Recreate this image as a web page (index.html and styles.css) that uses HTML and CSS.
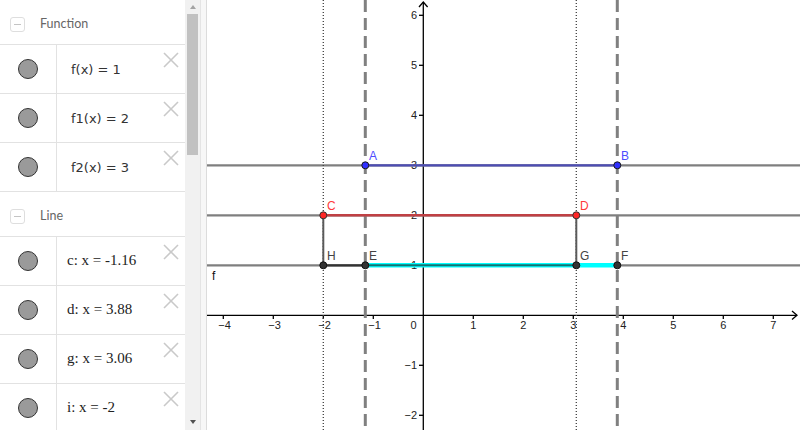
FILE: index.html
```html
<!DOCTYPE html>
<html>
<head>
<meta charset="utf-8">
<link rel="stylesheet" href="styles.css">
</head>
<body>
<div class="app">
  <div class="algebra">
    <div class="list">
      <div class="group-head"><span class="toggle"></span><span class="group-title">Function</span></div>
      <div class="item">
        <div class="marble-cell"><span class="marble"></span></div>
        <div class="def fn">f(x) = 1</div>
        <svg class="close" viewBox="0 0 16 16"><line x1="1" y1="1" x2="15" y2="15"/><line x1="15" y1="1" x2="1" y2="15"/></svg>
      </div>
      <div class="item">
        <div class="marble-cell"><span class="marble"></span></div>
        <div class="def fn">f1(x) = 2</div>
        <svg class="close" viewBox="0 0 16 16"><line x1="1" y1="1" x2="15" y2="15"/><line x1="15" y1="1" x2="1" y2="15"/></svg>
      </div>
      <div class="item">
        <div class="marble-cell"><span class="marble"></span></div>
        <div class="def fn">f2(x) = 3</div>
        <svg class="close" viewBox="0 0 16 16"><line x1="1" y1="1" x2="15" y2="15"/><line x1="15" y1="1" x2="1" y2="15"/></svg>
      </div>
      <div class="group-head"><span class="toggle"></span><span class="group-title">Line</span></div>
      <div class="item">
        <div class="marble-cell"><span class="marble"></span></div>
        <div class="def ln">c: x = -1.16</div>
        <svg class="close" viewBox="0 0 16 16"><line x1="1" y1="1" x2="15" y2="15"/><line x1="15" y1="1" x2="1" y2="15"/></svg>
      </div>
      <div class="item">
        <div class="marble-cell"><span class="marble"></span></div>
        <div class="def ln">d: x = 3.88</div>
        <svg class="close" viewBox="0 0 16 16"><line x1="1" y1="1" x2="15" y2="15"/><line x1="15" y1="1" x2="1" y2="15"/></svg>
      </div>
      <div class="item">
        <div class="marble-cell"><span class="marble"></span></div>
        <div class="def ln">g: x = 3.06</div>
        <svg class="close" viewBox="0 0 16 16"><line x1="1" y1="1" x2="15" y2="15"/><line x1="15" y1="1" x2="1" y2="15"/></svg>
      </div>
      <div class="item">
        <div class="marble-cell"><span class="marble"></span></div>
        <div class="def ln">i: x = -2</div>
        <svg class="close" viewBox="0 0 16 16"><line x1="1" y1="1" x2="15" y2="15"/><line x1="15" y1="1" x2="1" y2="15"/></svg>
      </div>
    </div>
    <div class="scrollbar">
      <div class="arrow-box top"><span class="arrow up"></span></div>
      <div class="thumb"></div>
      <div class="track-rest"></div>
      <div class="arrow-box bottom"><span class="arrow down"></span></div>
    </div>
  </div>
  <div class="splitter"></div>
  <svg class="graphics" width="593" height="430" viewBox="207 0 593 430">
    <g class="axis">
      <line x1="207" y1="315.3" x2="797" y2="315.3"/>
      <polyline class="arrowhead" points="792,311 797,315.3 792,319.6"/>
      <line x1="423.3" y1="2" x2="423.3" y2="430"/>
      <polyline class="arrowhead" points="419,7 423.3,2 427.6,7"/>
      <line x1="223.3" y1="315" x2="223.3" y2="319"/>
      <line x1="273.3" y1="315" x2="273.3" y2="319"/>
      <line x1="323.3" y1="315" x2="323.3" y2="319"/>
      <line x1="373.3" y1="315" x2="373.3" y2="319"/>
      <line x1="473.3" y1="315" x2="473.3" y2="319"/>
      <line x1="523.3" y1="315" x2="523.3" y2="319"/>
      <line x1="573.3" y1="315" x2="573.3" y2="319"/>
      <line x1="623.3" y1="315" x2="623.3" y2="319"/>
      <line x1="673.3" y1="315" x2="673.3" y2="319"/>
      <line x1="723.3" y1="315" x2="723.3" y2="319"/>
      <line x1="773.3" y1="315" x2="773.3" y2="319"/>
      <line x1="419" y1="15.3" x2="423.3" y2="15.3"/>
      <line x1="419" y1="65.3" x2="423.3" y2="65.3"/>
      <line x1="419" y1="115.3" x2="423.3" y2="115.3"/>
      <line x1="419" y1="165.3" x2="423.3" y2="165.3"/>
      <line x1="419" y1="215.3" x2="423.3" y2="215.3"/>
      <line x1="419" y1="265.3" x2="423.3" y2="265.3"/>
      <line x1="419" y1="365.3" x2="423.3" y2="365.3"/>
      <line x1="419" y1="415.3" x2="423.3" y2="415.3"/>
    </g>
    <g class="tick-label x-labels">
      <text x="224.5" y="329">−4</text>
      <text x="274.5" y="329">−3</text>
      <text x="324.5" y="329">−2</text>
      <text x="374.5" y="329">−1</text>
      <text x="413.5" y="329">0</text>
      <text x="473.3" y="329">1</text>
      <text x="523.3" y="329">2</text>
      <text x="573.3" y="329">3</text>
      <text x="623.3" y="329">4</text>
      <text x="673.3" y="329">5</text>
      <text x="723.3" y="329">6</text>
      <text x="773.3" y="329">7</text>
    </g>
    <g class="tick-label y-labels">
      <text x="417" y="19">6</text>
      <text x="417" y="69">5</text>
      <text x="417" y="119">4</text>
      <text x="417" y="169">3</text>
      <text x="417" y="219">2</text>
      <text x="417" y="269">1</text>
      <text x="417" y="369">−1</text>
      <text x="417" y="419">−2</text>
    </g>
    <g class="hline">
      <line x1="207" y1="165.3" x2="800" y2="165.3"/>
      <line x1="207" y1="215.3" x2="800" y2="215.3"/>
      <line x1="207" y1="265.3" x2="800" y2="265.3"/>
    </g>
    <g class="dashed">
      <line x1="365.3" y1="0" x2="365.3" y2="430"/>
      <line x1="617.3" y1="0" x2="617.3" y2="430"/>
    </g>
    <g class="dotted">
      <line x1="323.3" y1="0" x2="323.3" y2="430"/>
      <line x1="576.3" y1="0" x2="576.3" y2="430"/>
    </g>
    <line class="seg-gray" x1="323.3" y1="215.3" x2="323.3" y2="265.3"/>
    <line class="seg-gray" x1="576.3" y1="215.3" x2="576.3" y2="265.3"/>
    <line class="seg-blue" x1="365.3" y1="165.3" x2="617.3" y2="165.3"/>
    <line class="seg-red" x1="323.3" y1="215.3" x2="576.3" y2="215.3"/>
    <line class="seg-cyan" x1="365.3" y1="265.3" x2="617.3" y2="265.3"/>
    <line class="seg-teal" x1="365.3" y1="265.3" x2="576.3" y2="265.3"/>
    <line class="seg-dark" x1="323.3" y1="265.3" x2="365.3" y2="265.3"/>
    <g class="pt-blue">
      <circle cx="365.3" cy="165.3" r="3.5"/>
      <circle cx="617.3" cy="165.3" r="3.5"/>
    </g>
    <g class="pt-red">
      <circle cx="323.3" cy="215.3" r="3.5"/>
      <circle cx="576.3" cy="215.3" r="3.5"/>
    </g>
    <g class="pt-dark">
      <circle cx="323.3" cy="265.3" r="3.5"/>
      <circle cx="365.3" cy="265.3" r="3.5"/>
      <circle cx="576.3" cy="265.3" r="3.5"/>
      <circle cx="617.3" cy="265.3" r="3.5"/>
    </g>
    <g class="pt-label lbl-blue">
      <text x="369" y="160">A</text>
      <text x="621" y="160">B</text>
    </g>
    <g class="pt-label lbl-red">
      <text x="327" y="210">C</text>
      <text x="580" y="210">D</text>
    </g>
    <g class="pt-label lbl-dark">
      <text x="327" y="260">H</text>
      <text x="369" y="260">E</text>
      <text x="580" y="260">G</text>
      <text x="621" y="260">F</text>
    </g>
    <text class="fn-label" x="212" y="280">f</text>
  </svg>
</div>
</body>
</html>
```
FILE: styles.css
```css
html, body {
  margin: 0;
  padding: 0;
}
body {
  width: 800px;
  height: 430px;
  overflow: hidden;
  background: #ffffff;
  font-family: Lato, "Noto Sans", sans-serif;
}
.app {
  display: flex;
  height: 430px;
}
.algebra {
  display: flex;
  width: 200px;
  flex: none;
  height: 430px;
}
.list {
  width: 185px;
  flex: none;
  overflow: hidden;
  background: #fff;
}
.group-head {
  height: 45px;
  box-sizing: border-box;
  padding: 17px 0 0 10px;
  display: flex;
  align-items: flex-start;
  border-bottom: 1px solid #e2e2e2;
}
.toggle {
  width: 15px;
  height: 15px;
  box-sizing: border-box;
  border: 1px solid #dedede;
  border-radius: 3px;
  display: flex;
  align-items: center;
  justify-content: center;
  flex: none;
}
.toggle::before {
  content: "";
  width: 7px;
  height: 1.5px;
  background: #c4c4c4;
}
.group-title {
  margin-left: 15px;
  font-size: 12.5px;
  line-height: 13px;
  color: #666666;
}
.item {
  height: 49px;
  box-sizing: border-box;
  display: flex;
  border-bottom: 1px solid #e2e2e2;
}
.marble-cell {
  width: 57px;
  box-sizing: border-box;
  flex: none;
  border-right: 1px solid #e2e2e2;
  display: flex;
  align-items: center;
  justify-content: center;
}
.marble {
  width: 20px;
  height: 20px;
  box-sizing: border-box;
  border-radius: 50%;
  background: #9a9a9a;
  border: 1.3px solid #333333;
}
.def {
  flex: 1;
  display: flex;
  align-items: center;
  color: #222222;
  white-space: nowrap;
}
.def.fn {
  font-family: "DejaVu Sans", sans-serif;
  font-size: 13px;
  color: #333333;
  padding-left: 14px;
}
.def.ln {
  font-family: "Liberation Serif", serif;
  font-size: 15px;
  padding-left: 10px;
  padding-bottom: 2px;
}
.close {
  flex: none;
  width: 16px;
  height: 16px;
  margin: 7px 6px 0 0;
}
.close line {
  stroke: #c9c9c9;
  stroke-width: 1.6;
}
.scrollbar {
  width: 15px;
  flex: none;
  background: #f1f1f1;
  display: flex;
  flex-direction: column;
}
.arrow-box {
  height: 14px;
  display: flex;
  justify-content: center;
  flex: none;
}
.arrow-box.top {
  align-items: flex-start;
  padding-top: 5px;
  box-sizing: border-box;
}
.arrow-box.bottom {
  align-items: flex-start;
  padding-top: 4px;
  box-sizing: border-box;
}
.arrow {
  width: 0;
  height: 0;
  border-left: 3.5px solid transparent;
  border-right: 3.5px solid transparent;
}
.arrow.up {
  border-bottom: 4px solid #a3a3a3;
}
.arrow.down {
  border-top: 4px solid #505050;
}
.thumb {
  height: 141px;
  margin: 0 2px;
  background: #c1c1c1;
  flex: none;
}
.track-rest {
  flex: 1;
}
.splitter {
  width: 7px;
  flex: none;
  box-sizing: border-box;
  background: #f7f7f7;
  border-left: 1px solid #e4e4e4;
  border-right: 1px solid #dcdcdc;
}
.graphics {
  display: block;
  flex: none;
  background: #ffffff;
}
.axis line,
.axis polyline {
  stroke: #000000;
  stroke-width: 1.3;
  fill: none;
}
.tick-label text {
  font-family: "Liberation Sans", Arial, sans-serif;
  font-size: 11px;
  fill: #222222;
}
.x-labels text {
  text-anchor: middle;
}
.y-labels text {
  text-anchor: end;
}
.hline line {
  stroke: #7f7f7f;
  stroke-width: 2.2;
}
.dashed line {
  stroke: #808080;
  stroke-width: 3;
  stroke-dasharray: 12 6;
}
.dotted line {
  stroke: #404040;
  stroke-width: 1.3;
  stroke-dasharray: 1 2;
}
.seg-gray {
  stroke: #5a5a5a;
  stroke-width: 2;
}
.seg-blue {
  stroke: #4d4db4;
  stroke-width: 2.2;
}
.seg-red {
  stroke: #c04044;
  stroke-width: 2.5;
}
.seg-cyan {
  stroke: #00ffff;
  stroke-width: 4.5;
}
.seg-teal {
  stroke: #137373;
  stroke-width: 2;
}
.seg-dark {
  stroke: #333333;
  stroke-width: 2.2;
}
.pt-blue circle {
  fill: #3030ff;
  stroke: #1a1a1a;
  stroke-width: 1;
}
.pt-red circle {
  fill: #ff2626;
  stroke: #333333;
  stroke-width: 1;
}
.pt-dark circle {
  fill: #333333;
  stroke: #111111;
  stroke-width: 1;
}
.pt-label text {
  font-family: "Liberation Sans", Arial, sans-serif;
  font-size: 12px;
}
.lbl-blue text {
  fill: #4d4dff;
}
.lbl-red text {
  fill: #ff3a3a;
}
.lbl-dark text {
  fill: #444444;
}
.fn-label {
  font-family: "Liberation Sans", Arial, sans-serif;
  font-size: 12px;
  fill: #111111;
}
```
